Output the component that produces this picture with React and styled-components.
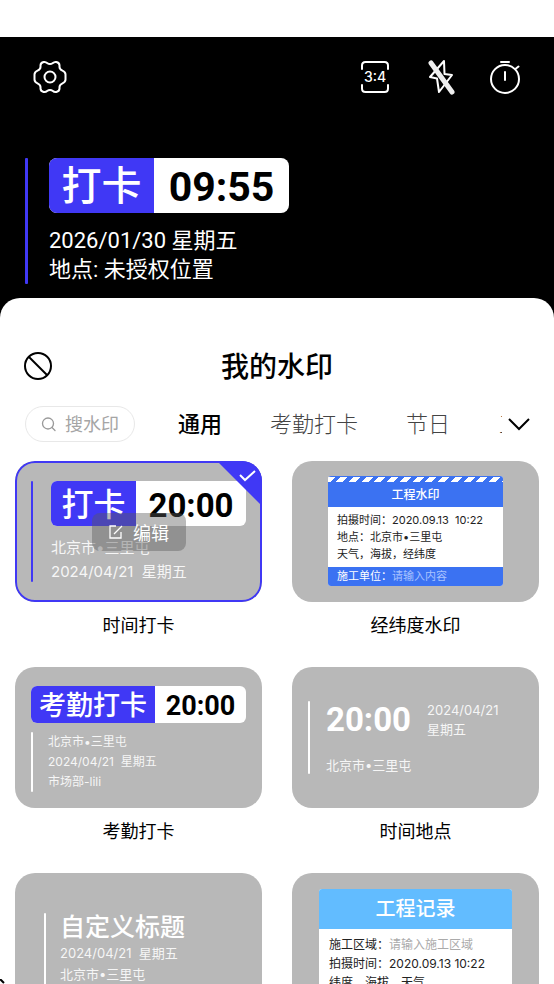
import React, { useState } from "react";
import styled, { createGlobalStyle } from "styled-components";

const GlobalStyle = createGlobalStyle`
  * {
    box-sizing: border-box;
  }
  body {
    margin: 0;
    background-color: white;
    font-family: Roboto, "Noto Sans CJK SC", sans-serif;
    color: black;
  }
  button, input {
    font-family: inherit;
    color: inherit;
  }
  button {
    padding: 0;
    border: none;
    background: none;
    cursor: pointer;
  }
`;

const Page = styled.div`
  position: relative;
  display: flex;
  flex-direction: column;
  height: 100vh;
  padding-top: 37px;
  overflow: hidden;
`;

const Camera = styled.header`
  flex: none;
  background-color: black;
  color: white;
  padding: 20px 33px 34px 25px;
`;

const Toolbar = styled.div`
  display: flex;
  align-items: center;
  gap: 26px;
`;

const IconButton = styled.button`
  display: flex;
  align-items: center;
  justify-content: center;
  width: 40px;
  height: 40px;
  margin-right: ${(props) => (props.$first ? "auto" : "0")};
  margin-left: ${(props) => (props.$first ? "5px" : "0")};
`;

const ToolbarEnd = styled.div`
  display: flex;
  gap: 25px;
  margin-right: -4px;
`;

const Stamp = styled.section`
  display: flex;
  gap: 21px;
  margin-top: 61px;
`;

const Bar = styled.div`
  flex: none;
  width: ${(props) => props.$width || 2}px;
  border-radius: 1px;
  background-color: ${(props) => props.$color || "white"};
`;

const StampText = styled.div`
  margin-top: 13px;
  font-size: 22px;
  line-height: 29px;
`;

const Badge = styled.div`
  flex: none;
  display: flex;
  width: ${(props) => props.$width || "auto"};
  height: ${(props) => props.$height}px;
  line-height: ${(props) => props.$height}px;
  border-radius: ${(props) => props.$radius}px;
  overflow: hidden;
  background-color: white;
  color: black;
  font-size: ${(props) => props.$size}px;
  font-weight: 700;
  white-space: nowrap;
`;

const BadgeLabel = styled.span`
  flex: none;
  width: ${(props) => props.$width}px;
  padding-top: 1px;
  background-color: #4038f5;
  color: white;
  text-align: center;
  font-weight: 500;
  font-size: ${(props) => props.$size}px;
`;

const BadgeTime = styled.time`
  flex: 1;
  padding-top: 2px;
  font-family: Roboto, sans-serif;
  text-align: center;
`;

const Sheet = styled.main`
  flex: 1;
  min-height: 0;
  display: flex;
  flex-direction: column;
  margin-top: -20px;
  border-radius: 20px 20px 0 0;
  background-color: white;
`;

const SheetHeader = styled.div`
  display: grid;
  grid-template-columns: 32px 1fr 32px;
  align-items: center;
  padding: 48px 22px 0;
`;

const Title = styled.h1`
  margin: 0;
  padding-top: 4px;
  font-size: 28px;
  line-height: 36px;
  font-weight: 500;
  text-align: center;
`;

const PlainButton = styled.button`
  display: flex;
  align-items: center;
  justify-content: center;
  height: 32px;
`;

const FilterRow = styled.div`
  display: flex;
  align-items: center;
  margin-top: 20px;
  padding: 0 18px 0 25px;
`;

const Search = styled.label`
  flex: none;
  display: flex;
  align-items: center;
  gap: 8px;
  width: 110px;
  height: 36px;
  padding: 0 12px 0 15px;
  border: 1px solid #e8e8e8;
  border-radius: 18px;
  color: #a5a5a5;
  svg {
    flex: none;
  }
`;

const SearchInput = styled.input`
  min-width: 0;
  width: 100%;
  padding: 2px 0 0;
  border: none;
  outline: none;
  background: none;
  font-size: 18px;
  line-height: 26px;
  &::placeholder {
    color: #a5a5a5;
    opacity: 1;
  }
`;

const Tabs = styled.nav`
  flex: 1;
  min-width: 0;
  display: flex;
  gap: 48px;
  margin: 0 2px 0 43px;
  padding-top: 2px;
  overflow: hidden;
`;

const Tab = styled.button`
  flex: none;
  font-size: 22px;
  line-height: 32px;
  font-weight: ${(props) => (props.$active ? 500 : 300)};
  color: ${(props) => (props.$active ? "black" : "#444")};
  &:last-child {
    margin-left: 1px;
  }
`;

const Grid = styled.div`
  flex: 1;
  min-height: 0;
  display: grid;
  grid-template-columns: 1fr 1fr;
  grid-auto-rows: max-content;
  gap: 27px 30px;
  padding: 19px 15px 0;
  overflow: hidden;
`;

const CardBox = styled.div`
  position: relative;
  display: flex;
  flex-direction: column;
  min-width: 0;
`;

const Card = styled.button`
  position: relative;
  display: block;
  width: 100%;
  height: 141px;
  border-radius: 20px;
  background-color: #b8b8b8;
  color: white;
  font-family: Inter, "Noto Sans CJK SC", sans-serif;
  text-align: left;
  overflow: hidden;
`;

const SelectedRing = styled.span`
  position: absolute;
  inset: 0;
  border: 2px solid #4038f5;
  border-radius: 20px;
`;

const Corner = styled.svg`
  position: absolute;
  top: 0;
  right: 0;
`;

const EditButton = styled.button`
  position: absolute;
  top: 52px;
  left: 50%;
  transform: translateX(-50%);
  display: flex;
  align-items: center;
  justify-content: center;
  gap: 9px;
  width: 94px;
  height: 38px;
  border-radius: 8px;
  background-color: rgba(90, 90, 90, 0.42);
  color: white;
  font-size: 18px;
`;

const CardLabel = styled.div`
  margin-top: 10px;
  font-size: 18px;
  line-height: 28px;
  text-align: center;
`;

const Inner = styled.div`
  display: flex;
  flex-direction: ${(props) => (props.$column ? "column" : "row")};
  align-items: ${(props) => props.$align || "stretch"};
  height: 100%;
  gap: ${(props) => props.$gap}px;
  padding: ${(props) => props.$padding};
`;

const Fill = styled.div`
  flex: 1;
  min-width: 0;
`;

const Lines = styled.div`
  margin-top: ${(props) => props.$top || 0}px;
  font-size: ${(props) => props.$size}px;
  line-height: ${(props) => props.$line}px;
  color: ${(props) => props.$color || "#f6f6f6"};
  white-space: pre;
`;

const TimeRow = styled.div`
  display: flex;
  align-items: center;
  gap: 16px;
`;

const BigTime = styled.time`
  font-family: Roboto, sans-serif;
  font-size: 33px;
  line-height: 38px;
  font-weight: 700;
`;

const CustomTitle = styled.div`
  font-size: 25px;
  line-height: 28px;
  font-weight: 500;
`;

const Panel = styled.div`
  width: ${(props) => props.$width}px;
  margin: 0 auto;
  border-radius: 3px;
  overflow: hidden;
  background-color: white;
  color: #222;
`;

const Stripes = styled.div`
  height: 6px;
  border-top: 1px solid #3b72f2;
  background: repeating-linear-gradient(
    135deg,
    white 0 5px,
    #3b72f2 5px 9px
  );
`;

const PanelHead = styled.div`
  height: ${(props) => props.$height}px;
  line-height: ${(props) => props.$height}px;
  background-color: ${(props) => props.$color};
  color: white;
  font-size: ${(props) => props.$size}px;
  font-weight: 500;
  text-align: center;
`;

const PanelBody = styled.div`
  padding: ${(props) => props.$padding};
`;

const PanelFoot = styled.div`
  height: 19px;
  padding-left: 9px;
  background-color: #3b72f2;
  color: white;
  font-size: 11px;
  line-height: 19px;
`;

const Hint = styled.span`
  color: ${(props) => props.$color};
`;

const CornerMark = styled.svg`
  position: absolute;
  left: 0;
  bottom: 0;
`;

const quarters = ["1 1", "-1 1", "1 -1", "-1 -1"];

const GearIcon = () => (
  <svg width="34" height="34" viewBox="-17 -17 34 34" fill="none" stroke="white" strokeWidth="2">
    {quarters.map((scale) => (
      <path
        key={scale}
        transform={`scale(${scale})`}
        d="M0-13Q-1.500-13-2.500-13.800C-4-15-5-15.300-6.300-15C-8.500-14.500-9.500-13.500-9.500-11.500V-10C-9.500-8-11-7-12.500-6.300C-15-5.200-15.500-4-15.500-2.500V0"
      />
    ))}
    <circle r="5.500" />
  </svg>
);

const RatioIcon = () => (
  <svg width="30" height="34" viewBox="0 0 30 34" fill="none" stroke="white" strokeWidth="2" strokeLinecap="round">
    <path d="M2 9V5.500Q2 2 5.500 2H24.500Q28 2 28 5.500V9M2 25V28.500Q2 32 5.500 32H24.500Q28 32 28 28.500V25" />
    <text x="15" y="22" textAnchor="middle" fill="white" stroke="none" fontFamily="Inter, sans-serif" fontSize="14" fontWeight="500">
      3:4
    </text>
  </svg>
);

const FlashOffIcon = () => (
  <svg width="30" height="36" viewBox="0 0 30 36" fill="none" stroke="white" strokeWidth="2" strokeLinejoin="round" strokeLinecap="round">
    <path d="M19 2L5 18L12 19.500L14 33L27 16L19.500 15Z" />
    <path d="M6 4L27 33" strokeWidth="5" stroke="#eee" />
  </svg>
);

const TimerIcon = () => (
  <svg width="32" height="36" viewBox="0 0 32 36" fill="none" stroke="white" strokeWidth="2" strokeLinecap="round">
    <circle cx="16" cy="20" r="14" />
    <path d="M12 3H20M16 13V21M27 9.500L29.500 7.500" />
  </svg>
);

const tabs = ["通用", "考勤打卡", "节日", "工程"];

const CheckInStamp = () => (
  <Inner $gap={18} $padding="20px 16px">
    <Bar $color="#4038f5" />
    <Fill>
      <Badge $height={45} $radius={6} $size={33}>
        <BadgeLabel $width={85} $size={32}>打卡</BadgeLabel>
        <BadgeTime>20:00</BadgeTime>
      </Badge>
      <Lines $size={15} $line={24} $top={10}>
        {"北京市•三里屯\n2024/04/21  星期五"}
      </Lines>
    </Fill>
  </Inner>
);

const GeoStamp = () => (
  <Inner $align="flex-start" $padding="15px 0 0">
    <Panel $width={175}>
      <Stripes />
      <PanelHead $height={25} $size={12} $color="#3b72f2">工程水印</PanelHead>
      <PanelBody $padding="5px 9px 4px">
        <Lines $size={11} $line={17} $color="#222">
          {"拍摄时间：2020.09.13  10:22\n地点：北京市•三里屯\n天气，海拔，经纬度"}
        </Lines>
      </PanelBody>
      <PanelFoot>
        施工单位：<Hint $color="#a9c3ff">请输入内容</Hint>
      </PanelFoot>
    </Panel>
  </Inner>
);

const AttendanceStamp = () => (
  <Inner $column $gap={9} $padding="19px 16px 17px">
    <Badge $height={37} $radius={6} $size={27}>
      <BadgeLabel $width={124} $size={27}>考勤打卡</BadgeLabel>
      <BadgeTime>20:00</BadgeTime>
    </Badge>
    <Inner $gap={15} $padding="0">
      <Bar />
      <Lines $size={12} $line={20}>
        {"北京市•三里屯\n2024/04/21  星期五\n市场部-lili"}
      </Lines>
    </Inner>
  </Inner>
);

const PlaceStamp = () => (
  <Inner $gap={16} $padding="34px 16px">
    <Bar />
    <div>
      <TimeRow>
        <BigTime>20:00</BigTime>
        <Lines $size={13} $line={19}>{"2024/04/21\n星期五"}</Lines>
      </TimeRow>
      <Lines $size={13} $line={20} $top={16}>北京市•三里屯</Lines>
    </div>
  </Inner>
);

const CustomStamp = () => (
  <Inner $gap={14} $padding="40px 29px 20px">
    <Bar />
    <div>
      <CustomTitle>自定义标题</CustomTitle>
      <Lines $size={13} $line={21} $top={2}>
        {"2024/04/21  星期五\n北京市•三里屯"}
      </Lines>
    </div>
  </Inner>
);

const RecordStamp = () => (
  <Inner $padding="16px 0 0">
    <Panel $width={193}>
      <PanelHead $height={40} $size={20} $color="#62bcff">工程记录</PanelHead>
      <PanelBody $padding="6px 10px">
        <Lines $size={12} $line={19} $color="#222">
          施工区域：<Hint $color="#aaa">请输入施工区域</Hint>
          {"\n拍摄时间：2020.09.13 10:22\n纬度，海拔，天气"}
        </Lines>
      </PanelBody>
    </Panel>
  </Inner>
);

const cards = [
  { name: "时间打卡", Stamp: CheckInStamp },
  { name: "经纬度水印", Stamp: GeoStamp },
  { name: "考勤打卡", Stamp: AttendanceStamp },
  { name: "时间地点", Stamp: PlaceStamp },
  { name: "自定义", Stamp: CustomStamp },
  { name: "工程记录", Stamp: RecordStamp },
];

const App = () => {
  const [tab, setTab] = useState("通用");
  const [selected, setSelected] = useState("时间打卡");
  return (
    <Page>
      <GlobalStyle />
      <Camera>
        <Toolbar>
          <IconButton $first aria-label="设置"><GearIcon /></IconButton>
          <ToolbarEnd>
            <IconButton aria-label="比例"><RatioIcon /></IconButton>
            <IconButton aria-label="闪光灯"><FlashOffIcon /></IconButton>
            <IconButton aria-label="定时"><TimerIcon /></IconButton>
          </ToolbarEnd>
        </Toolbar>
        <Stamp>
          <Bar $width={3} $color="#4038f5" />
          <div>
            <Badge $width="240px" $height={55} $radius={8} $size={41}>
              <BadgeLabel $width={105} $size={40}>打卡</BadgeLabel>
              <BadgeTime>09:55</BadgeTime>
            </Badge>
            <StampText>
              2026/01/30 星期五
              <br />
              地点: 未授权位置
            </StampText>
          </div>
        </Stamp>
      </Camera>
      <Sheet>
        <SheetHeader>
          <PlainButton aria-label="不使用水印">
            <svg width="30" height="30" viewBox="0 0 30 30" fill="none" stroke="black" strokeWidth="2">
              <circle cx="15" cy="15" r="13" />
              <path d="M6 6L24 24" />
            </svg>
          </PlainButton>
          <Title>我的水印</Title>
        </SheetHeader>
        <FilterRow>
          <Search>
            <svg width="16" height="16" viewBox="0 0 16 16" fill="none" stroke="#999" strokeWidth="1.300" strokeLinecap="round">
              <circle cx="7" cy="7.500" r="5.500" />
              <path d="M11 11.500L14 14.500" />
            </svg>
            <SearchInput placeholder="搜水印" />
          </Search>
          <Tabs>
            {tabs.map((name) => (
              <Tab key={name} $active={name === tab} onClick={() => setTab(name)}>
                {name}
              </Tab>
            ))}
          </Tabs>
          <PlainButton aria-label="展开">
            <svg width="32" height="20" viewBox="0 0 32 20" fill="none" stroke="black" strokeWidth="2">
              <path d="M5 5L15 15L25 5" />
            </svg>
          </PlainButton>
        </FilterRow>
        <Grid>
          {cards.map(({ name, Stamp: Preview }) => (
            <CardBox key={name}>
              <Card onClick={() => setSelected(name)}>
                <Preview />
                {selected === name && (
                  <>
                    <Corner width="45" height="45" viewBox="0 0 45 45" fill="none">
                      <path d="M0 0H45V45Z" fill="#4038f5" />
                      <path d="M23 14L28 19L38 10" stroke="white" strokeWidth="2" />
                    </Corner>
                    <SelectedRing />
                  </>
                )}
              </Card>
              {selected === name && (
                <EditButton>
                  <svg width="16" height="16" viewBox="0 0 16 16" fill="none" stroke="white" strokeWidth="1.300">
                    <path d="M8 2H2V14H13V8M6 10L14 2" />
                  </svg>
                  编辑
                </EditButton>
              )}
              <CardLabel>{name}</CardLabel>
            </CardBox>
          ))}
        </Grid>
      </Sheet>
      <CornerMark width="5" height="5" viewBox="0 0 5 5" stroke="black" strokeWidth="2">
        <path d="M0 0L4 4" />
      </CornerMark>
    </Page>
  );
};

export default App;
